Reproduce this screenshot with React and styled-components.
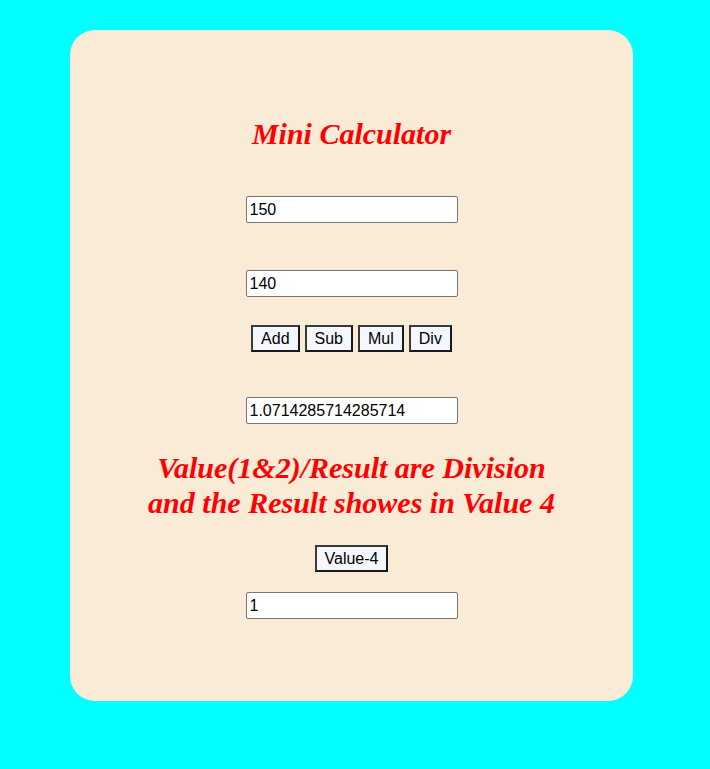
import React, { useState } from 'react';
import styled, { createGlobalStyle } from 'styled-components';

const GlobalStyle = createGlobalStyle`
    html, body {
        margin: 0;
        padding: 0;
        background: #00ffff;
    }
    body {
        min-height: 769px;
    }
`;

const Page = styled.div`
    padding: 30px 0 0 70px;
`;

const Card = styled.div`
    width: 563px;
    box-sizing: border-box;
    background: #faebd7;
    border-radius: 25px;
    display: flex;
    flex-direction: column;
    align-items: center;
    padding: 86px 0 82px;
`;

const Title = styled.h1`
    margin: 0;
    font-family: "Liberation Serif", "Times New Roman", serif;
    font-style: italic;
    font-weight: 700;
    font-size: 30px;
    line-height: 36px;
    color: #ff0000;
    text-align: center;
`;

const Note = styled.h2`
    margin: ${(p) => p.$top || 0}px 0 0;
    font-family: "Liberation Serif", "Times New Roman", serif;
    font-style: italic;
    font-weight: 700;
    font-size: 30px;
    line-height: 35px;
    color: #ff0000;
    text-align: center;
`;

const Field = styled.input`
    display: block;
    margin: ${(p) => p.$top || 0}px 0 0;
    width: 212px;
    height: 27px;
    box-sizing: border-box;
    padding: 0 3px;
    border: 1px solid #767676;
    border-radius: 2px;
    background: #ffffff;
    font-family: "Liberation Sans", Arial, sans-serif;
    font-size: 16px;
    color: #000;
    outline: none;
`;

const ButtonRow = styled.div`
    display: flex;
    gap: 5px;
    margin-top: ${(p) => p.$top || 0}px;
`;

const Button = styled.button`
    height: 27px;
    box-sizing: border-box;
    padding: 0 8px;
    margin: ${(p) => p.$top || 0}px 0 0;
    background: #f5f7ff;
    border: 2px solid;
    border-color: #3a3a3a #1a1a1a #1a1a1a #3a3a3a;
    border-radius: 0;
    font-family: "Liberation Sans", Arial, sans-serif;
    font-size: 16px;
    color: #000;
    cursor: pointer;
`;

export default function App() {
    const [first, setFirst] = useState('150');
    const [second, setSecond] = useState('140');
    const [result, setResult] = useState('1.0714285714285714');
    const [fourth, setFourth] = useState('1');

    const run = (op) => {
        const a = parseFloat(first);
        const b = parseFloat(second);
        if (op === 'add') setResult(String(a + b));
        if (op === 'sub') setResult(String(a - b));
        if (op === 'mul') setResult(String(a * b));
        if (op === 'div') setResult(String(a / b));
    };

    const divideAll = () => {
        // (value1 / value2) / result
        const a = parseFloat(first);
        const b = parseFloat(second);
        const r = parseFloat(result);
        setFourth(String(a / b / r));
    };

    return (
        <>
            <GlobalStyle />
            <Page>
                <Card>
                    <Title>Mini Calculator</Title>
                    <Field $top={44} value={first} onChange={(e) => setFirst(e.target.value)} />
                    <Field $top={47} value={second} onChange={(e) => setSecond(e.target.value)} />
                    <ButtonRow $top={28}>
                        <Button onClick={() => run('add')}>Add</Button>
                        <Button onClick={() => run('sub')}>Sub</Button>
                        <Button onClick={() => run('mul')}>Mul</Button>
                        <Button onClick={() => run('div')}>Div</Button>
                    </ButtonRow>
                    <Field $top={45} value={result} onChange={(e) => setResult(e.target.value)} />
                    <Note $top={26}>
                        Value(1&amp;2)/Result are Division
                        <br />
                        and the Result showes in Value 4
                    </Note>
                    <Button $top={25} onClick={divideAll}>Value-4</Button>
                    <Field $top={20} value={fourth} onChange={(e) => setFourth(e.target.value)} />
                </Card>
            </Page>
        </>
    );
}
